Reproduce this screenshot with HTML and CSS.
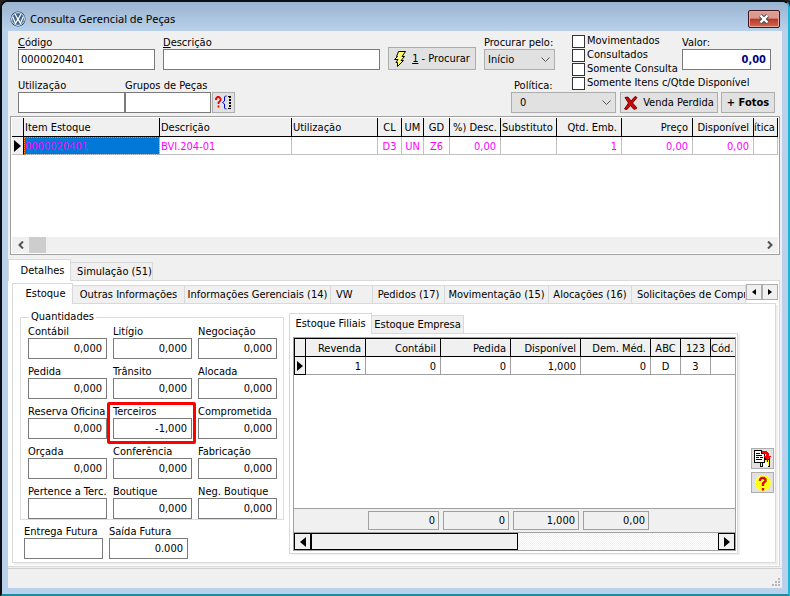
FILE: index.html
```
<!DOCTYPE html>
<html lang="pt-BR">
<head>
<meta charset="utf-8">
<title>Consulta Gerencial de Peças</title>
<link rel="stylesheet" href="styles.css">
</head>
<body>
<main class="window">
  <header class="titlebar">
    <svg class="logo" viewBox="0 0 16 16" aria-hidden="true"><circle cx="8" cy="8" r="7.5" fill="#1d3f66"/><circle cx="8" cy="8" r="6.4" fill="#3f658e" stroke="#e4eef8" stroke-width="1"/><path d="M5 2.8 8 8.6 11 2.8M2.6 5.5 5.6 12.4 8 8 10.4 12.4 13.4 5.5" fill="none" stroke="#fff" stroke-width="1.2"/></svg>
    <h1>Consulta Gerencial de Peças</h1>
    <button class="close" aria-label="Fechar"><svg width="12" height="10" viewBox="0 0 12 10"><path d="M2.5 1.5 9.5 8.5M9.5 1.5 2.5 8.5" stroke="#3d4654" stroke-width="4.2"/><path d="M2.5 1.5 9.5 8.5M9.5 1.5 2.5 8.5" stroke="#fff" stroke-width="2.4"/></svg></button>
  </header>

  <div class="client">
    <form class="search">
      <div class="row first">
        <div class="field codigo"><label for="codigo"><u>C</u>ódigo</label><input id="codigo" type="text" value="0000020401"></div>
        <div class="field descricao"><label for="descricao"><u>D</u>escrição</label><input id="descricao" type="text"></div>
        <button type="button" class="btn find"><svg width="12" height="16" viewBox="0 0 12 16"><path d="M4.5.5H11.5L8 5.5H10.500L7 9.500H9.500L3.500 15.500V11.500H2L4 8.500H.5L3.500 5.500H2.500Z" fill="#ffff60" stroke="#000"/><path d="M6 2.500 4 6.500M8 6.500 5 9.500" stroke="#fff" fill="none"/></svg><span><u>1</u> - Procurar</span></button>
        <div class="field por"><label for="por">Procurar pelo:</label><select id="por"><option>Início</option></select></div>
        <div class="checks">
          <label><input type="checkbox">Movimentados</label>
          <label><input type="checkbox">Consultados</label>
          <label><input type="checkbox">Somente Consulta</label>
          <label><input type="checkbox">Somente Itens c/Qtde Disponível</label>
        </div>
        <div class="field valor"><label for="valor">Valor:</label><input id="valor" type="text" value="0,00"></div>
      </div>
      <div class="row second">
        <div class="field utilizacao"><label for="utilizacao">Utilização</label><input id="utilizacao" type="text"></div>
        <div class="field grupos"><label for="grupos">Grupos de Peças</label><input id="grupos" type="text"></div>
        <button type="button" class="btn groups" aria-label="Escolher grupos"><svg width="17" height="15" viewBox="0 0 17 15"><path d="M1 5V3.500L2.500 2H4L5.500 3.500V5.500L3.500 7.500V9M3.500 10.500V12.500" fill="none" stroke="#f00000" stroke-width="1.800"/><path d="M11.500 1H10.500L9.500 2V6L7.500 7.500 9.500 9V13L10.500 14H11.500" fill="none" stroke="#0000d8"/><path d="M13 1.500H16M13 13.500H16" stroke="#000"/><path d="M15 1V14" stroke="#000" stroke-width="2" stroke-dasharray="2 1"/></svg></button>
        <div class="field politica"><label for="politica">Política:</label><select id="politica"><option>0</option></select></div>
        <button type="button" class="btn lost"><svg width="14" height="14" viewBox="0 0 14 14"><path d="M1 1.500 4 1 7 5 11 .5 13 1.500 8.500 7 13 12 10 13.500 6.500 9.500 3 13.500.5 13 4.500 7Z" fill="#c80808" stroke="#7e0000"/></svg><span>Venda Perdida</span></button>
        <button type="button" class="btn photos">+ Fotos</button>
      </div>
    </form>

    <section class="items">
      <table class="grid">
        <colgroup><col class="w12"><col class="w136"><col><col class="w86"><col class="w24"><col class="w22"><col class="w26"><col class="w51"><col class="w56"><col class="w65"><col class="w71"><col class="w61"><col class="w24"></colgroup>
        <thead><tr><th></th><th>Item Estoque</th><th>Descrição</th><th>Utilização</th><th class="c">CL</th><th class="c">UM</th><th class="c">GD</th><th class="c">%) Desc.</th><th>Substituto</th><th class="r">Qtd. Emb.</th><th class="r">Preço</th><th class="r">Disponível</th><th class="cut">ítica</th></tr></thead>
        <tbody><tr><td class="mark"><svg width="7" height="12" viewBox="0 0 7 12"><path d="M0 0 7 6 0 12Z"/></svg></td><td class="sel">0000020401</td><td>BVI.204-01</td><td></td><td class="c">D3</td><td class="c">UN</td><td class="c">Z6</td><td class="r">0,00</td><td></td><td class="r">1</td><td class="r">0,00</td><td class="r">0,00</td><td></td></tr></tbody>
      </table>
      <div class="hscroll"><button aria-label="Rolar à esquerda"><svg width="6" height="8" viewBox="0 0 6 8"><path d="M5 .5 1.500 4 5 7.500"/></svg></button><i></i><button class="end" aria-label="Rolar à direita"><svg width="6" height="8" viewBox="0 0 6 8"><path d="M1 .5 4.500 4 1 7.500"/></svg></button></div>
    </section>

    <nav class="tabs outer"><button class="tab on">Detalhes</button><button class="tab">Simulação (51)</button></nav>
    <section class="page">
      <nav class="tabs inner">
        <div class="strip"><button class="tab on">Estoque</button><button class="tab t112">Outras Informações</button><button class="tab t146">Informações Gerenciais (14)</button><button class="tab t42 left">VW</button><button class="tab t72">Pedidos (17)</button><button class="tab t104">Movimentação (15)</button><button class="tab t83">Alocações (16)</button><button class="tab rest left">Solicitações de Compra</button></div>
        <div class="spin"><button aria-label="Abas anteriores"><svg width="4" height="6" viewBox="0 0 4 6"><path d="M4 0V6L0 3Z"/></svg></button><button aria-label="Próximas abas"><svg width="4" height="6" viewBox="0 0 4 6"><path d="M0 0V6L4 3Z"/></svg></button></div>
      </nav>
      <div class="sheet">
        <div class="left-side">
          <fieldset>
            <legend>Quantidades</legend>
            <div class="amounts">
              <div class="field"><label for="q1">Contábil</label><input id="q1" value="0,000"></div>
              <div class="field"><label for="q2">Litígio</label><input id="q2" value="0,000"></div>
              <div class="field"><label for="q3">Negociação</label><input id="q3" value="0,000"></div>
              <div class="field"><label for="q4">Pedida</label><input id="q4" value="0,000"></div>
              <div class="field"><label for="q5">Trânsito</label><input id="q5" value="0,000"></div>
              <div class="field"><label for="q6">Alocada</label><input id="q6" value="0,000"></div>
              <div class="field"><label for="q7">Reserva Oficina</label><input id="q7" value="0,000"></div>
              <div class="field flagged"><label for="q8">Terceiros</label><input id="q8" value="-1,000"></div>
              <div class="field"><label for="q9">Comprometida</label><input id="q9" value="0,000"></div>
              <div class="field"><label for="q10">Orçada</label><input id="q10" value="0,000"></div>
              <div class="field"><label for="q11">Conferência</label><input id="q11" value="0,000"></div>
              <div class="field"><label for="q12">Fabricação</label><input id="q12" value="0,000"></div>
              <div class="field"><label for="q13">Pertence a Terc.</label><input id="q13"></div>
              <div class="field"><label for="q14">Boutique</label><input id="q14" value="0,000"></div>
              <div class="field"><label for="q15">Neg. Boutique</label><input id="q15" value="0,000"></div>
            </div>
          </fieldset>
          <div class="amounts future">
            <div class="field"><label for="q16">Entrega Futura</label><input id="q16"></div>
            <div class="field"><label for="q17">Saída Futura</label><input id="q17" value="0.000"></div>
          </div>
        </div>

        <div class="branches">
          <nav class="tabs"><button class="tab on">Estoque Filiais</button><button class="tab">Estoque Empresa</button></nav>
          <div class="frame">
            <div class="stock">
              <table>
                <colgroup><col class="w12"><col class="w60"><col class="w75"><col class="w70"><col class="w70"><col class="w70"><col class="w30"><col class="w30"><col></colgroup>
                <thead><tr><th></th><th class="r">Revenda</th><th class="r">Contábil</th><th class="r">Pedida</th><th class="r">Disponível</th><th class="r">Dem. Méd.</th><th class="c">ABC</th><th class="c">123</th><th class="cut">Cód.</th></tr></thead>
                <tbody><tr><td class="mark"><svg width="6" height="10" viewBox="0 0 6 10"><path d="M0 0 6 5 0 10Z"/></svg></td><td class="r">1</td><td class="r">0</td><td class="r">0</td><td class="r">1,000</td><td class="r">0</td><td class="c">D</td><td class="c">3</td><td></td></tr></tbody>
              </table>
              <div class="totals"><output class="wide">0</output><output>0</output><output>1,000</output><output>0,00</output></div>
              <div class="classic"><button aria-label="Rolar à esquerda"><svg width="6" height="10" viewBox="0 0 6 10"><path d="M6 0V10L0 5Z"/></svg></button><i></i><button class="end" aria-label="Rolar à direita"><svg width="6" height="10" viewBox="0 0 6 10"><path d="M0 0V10L6 5Z"/></svg></button></div>
            </div>
          </div>
        </div>

        <div class="tools">
          <button class="btn" aria-label="Exportar"><svg width="17" height="17" viewBox="0 0 17 17" shape-rendering="crispEdges"><path d="M6 8H16V17H6Z" fill="#111"/><path d="M7 12H8V16H7ZM14 10H15V16H14ZM11 10H13V12H11Z" fill="#ff0"/><path d="M9 12H14V17H9Z" fill="#fff"/><path d="M.5.5H7.500L10.500 3.500V12.500H.5Z" fill="#fff" stroke="#000"/><path d="M7.500.5V3.500H10.500M2 3.500H6M2 5.500H8M2 7.500H5M6 7.500H9M2 9.500H8" fill="none" stroke="#000"/><path d="M8 1H12L15 3V6H17L13 10 10 6H12V4L8 3Z" fill="#f00"/></svg></button>
          <button class="btn" aria-label="Ajuda"><svg width="16" height="16" viewBox="0 0 16 16"><defs><pattern id="dots" width="2" height="2" patternUnits="userSpaceOnUse"><path d="M0 0H1V1H0ZM1 1H2V2H1Z" fill="#ff0"/><path d="M1 0H2V1H1ZM0 1H1V2H0Z" fill="#fff"/></pattern></defs><circle cx="8" cy="8" r="7.800" fill="url(#dots)"/><path d="M5 6V4.500L6.500 3H9L10.500 4.500V6L8 8.500V11M8 13V15.500" fill="none" stroke="#e00000" stroke-width="2.400"/></svg></button>
        </div>
      </div>
    </section>
    <footer class="status"><svg width="8" height="8" viewBox="0 0 8 8"><path d="M6 0H8V2H6ZM3 3H5V5H3ZM6 3H8V5H6ZM0 6H2V8H0ZM3 6H5V8H3ZM6 6H8V8H6Z" fill="#b8b8b8"/></svg></footer>
  </div>
</main>
</body>
</html>
```
FILE: styles.css
```
* { box-sizing: border-box; }
body {
  margin: 0;
  background: #222;
  color: #000;
  font: 11px/14px "DejaVu Sans Condensed", "DejaVu Sans", sans-serif;
}
button, input, select { font: inherit; color: inherit; margin: 0; border-radius: 0; }
button { padding: 0; }
svg { display: block; flex: none; }
label, th, td, button, legend { white-space: nowrap; }

.window {
  display: flex;
  flex-direction: column;
  min-height: 100vh;
  padding: 0 6px 6px;
  border: 2px solid #0b1014;
  border-width: 2px 2px 3px;
  border-right-color: #1db5d8;
  border-bottom-color: #1b8ba4;
  border-radius: 8px 8px 0 0;
  background: #b9d1ea;
}
.titlebar {
  display: flex;
  align-items: center;
  gap: 4px;
  height: 29px;
  margin: 0 -6px;
  padding: 4px 8px 0;
  border-radius: 6px 6px 0 0;
  background: linear-gradient(#99b4d1, #b9d1ea);
}
.logo { width: 16px; height: 16px; }
h1 { margin: 0; font: 11px/16px "Noto Sans", "Open Sans", sans-serif; }
.close {
  display: flex;
  align-items: center;
  justify-content: center;
  width: 32px;
  height: 18px;
  margin-left: auto;
  border: 1px solid #431422;
  border-radius: 2px;
  box-shadow: inset 0 0 0 1px #e4a79d;
  background: linear-gradient(#d99a8f 0 45%, #b8372a 50%, #d2694f);
}

.client {
  display: flex;
  flex: 1;
  flex-direction: column;
  background: #f0f0f0;
}

/* search form */
.search { padding: 3px 7px 3px 10px; }
.row { display: flex; }
.field { display: flex; flex-direction: column; }
.field label { height: 14px; line-height: 16px; }
.field input {
  width: 100%;
  height: 21px;
  padding: 0 4px 0 2px;
  border: 1px solid #7a7a7a;
  background: #fff;
}
.first { gap: 8px; align-items: flex-start; }
.first .field { padding-top: 1px; }
.codigo { width: 137px; }
.descricao { flex: 1; }
.btn {
  display: flex;
  align-items: center;
  justify-content: center;
  border: 1px solid #adadad;
  background: #e1e1e1;
}
.find { gap: 6px; width: 88px; height: 23px; margin-top: 13px; }
select {
  width: 100%;
  height: 21px;
  padding: 0 3px;
  border: 1px solid #adadad;
  appearance: none;
  background: #e1e1e1 url("data:image/svg+xml,%3Csvg xmlns='http://www.w3.org/2000/svg' width='9' height='6'%3E%3Cpath d='M.5.5 4.500 4.500 8.500.5' fill='none' stroke='%23555'/%3E%3C/svg%3E") right 4px center no-repeat;
}
.por { width: 71px; }
.checks { width: 102px; margin-left: 9px; }
.checks label { display: flex; align-items: center; gap: 2px; height: 14px; }
.checks input {
  flex: none;
  width: 13px;
  height: 13px;
  border: 1px solid #333;
  appearance: none;
  background: #fff;
}
.valor { width: 89px; margin-right: 4px; }
.valor input { color: #000080; font-weight: bold; text-align: right; }
.second { align-items: flex-end; margin-top: -12px; }
.utilizacao { width: 107px; }
.grupos { width: 86px; }
.groups { width: 23px; height: 21px; margin-left: 1px; }
.politica { width: 105px; margin-left: auto; }
.politica label { padding-left: 3px; }
.politica select { padding-left: 8px; }
.lost { gap: 5px; width: 98px; height: 21px; margin-left: 4px; }
.photos { width: 54px; height: 21px; margin-left: 3px; font-weight: bold; }

/* item grid */
.items {
  display: flex;
  flex-direction: column;
  height: 139px;
  margin: 0 2px 4px 2px;
  padding: 1px;
  border: 1px solid #a0a0a0;
  background: #fff;
}
table { width: 100%; table-layout: fixed; border-collapse: separate; border-spacing: 0; }
th, td { height: 18px; padding: 2px 4px 0 1px; overflow: hidden; font-weight: normal; text-align: left; }
.grid th { height: 19px; border-right: 1px solid #000; border-bottom: 1px solid #000; background: #f0f0f0; }
.grid td { border-right: 1px solid #c0c0c0; border-bottom: 1px solid #c0c0c0; color: #f0f; }
.grid td.sel { background: #0078d7; outline: 1px dotted #ff8728; outline-offset: -1px; }
th.r, td.r { text-align: right; }
th.c, td.c { padding: 2px 1px 0; text-align: center; }
th.cut { padding: 2px 0 0; }
.grid td.mark { padding: 0 2px; border-right-color: #000; background: #f0f0f0; }
.w12 { width: 12px; } .w22 { width: 22px; } .w24 { width: 24px; } .w26 { width: 26px; }
.w30 { width: 30px; } .w51 { width: 51px; } .w56 { width: 56px; } .w60 { width: 60px; }
.w61 { width: 61px; } .w65 { width: 65px; } .w70 { width: 70px; } .w71 { width: 71px; }
.w75 { width: 75px; } .w86 { width: 86px; } .w136 { width: 136px; }
.hscroll { display: flex; height: 16px; margin-top: auto; background: #f0f0f0; }
.hscroll button {
  display: flex;
  align-items: center;
  justify-content: center;
  width: 17px;
  border: 0;
  background: none;
}
.hscroll path { fill: none; stroke: #505050; stroke-width: 2; }
.hscroll i { width: 17px; background: #cdcdcd; }
.hscroll .end, .classic .end { margin-left: auto; }

/* tabs */
.tabs { display: flex; align-items: flex-end; }
.tab {
  height: 18px;
  padding: 1px 3px 0 8px;
  border: 1px solid #d9d9d9;
  border-width: 1px 1px 0 0;
  background: #f0f0f0;
}
.tab.on {
  position: relative;
  height: 21px;
  margin-bottom: -1px;
  padding: 0 7px;
  border-left-width: 1px;
  background: #fff;
}
.outer .on { width: 63px; height: 22px; padding: 0 0 0 6px; }
.outer .tab:last-child { width: 82px; padding: 1px 0 0 6px; }
.page {
  display: flex;
  flex: 1;
  flex-direction: column;
  margin-right: 2px;
  padding: 2px 3px 3px 4px;
  border: 1px solid #d9d9d9;
  border-left: 0;
  background: #fff;
}
.inner { justify-content: space-between; margin-right: -2px; }
.strip { display: flex; flex: 1; align-items: flex-end; min-width: 0; height: 20px; }
.strip .tab { flex: none; padding: 1px 0 0; }
.strip .on { width: 61px; height: 21px; padding: 0 0 0 6px; }
.strip .left { padding-left: 5px; text-align: left; }
.strip .t42 { width: 42px; } .strip .t72 { width: 72px; } .strip .t83 { width: 83px; }
.strip .t104 { width: 104px; } .strip .t112 { width: 112px; } .strip .t146 { width: 146px; }
.strip .rest { flex: 1; min-width: 0; overflow: hidden; }
.spin { display: flex; align-self: flex-start; padding-top: 1px; }
.spin button {
  display: flex;
  align-items: center;
  justify-content: center;
  width: 16px;
  height: 16px;
  border: 1px solid #adadad;
  background: #f0f0f0;
}
.sheet {
  display: flex;
  flex: 1;
  padding: 6px 1px 3px 7px;
  border: 1px solid #d9d9d9;
  box-shadow: 2px 2px #f0f0f0;
}

/* quantities */
.left-side { width: 264px; }
fieldset { margin: 0; padding: 0 0 0 7px; border: 1px solid #dcdcdc; }
legend { height: 14px; margin-left: 1px; padding: 0 2px; }
.amounts { display: grid; grid-template-columns: repeat(3, 79px); gap: 5px 6px; }
.amounts input { text-align: right; }
.flagged { position: relative; }
.flagged::after {
  content: "";
  position: absolute;
  inset: -2px -4px -5px -6px;
  border: 3px solid #f00;
  border-radius: 2px;
  pointer-events: none;
}
.future { padding: 4px 0 0 4px; }

/* branch stock */
.branches { display: flex; flex: 1; flex-direction: column; min-width: 0; margin: 3px 13px 5px 5px; }
.branches .on { width: 83px; padding: 0; }
.branches .tab:last-child { width: 92px; padding: 1px 0 0; }
.frame {
  display: flex;
  flex: 1;
  padding: 3px 1px 2px 3px;
  border: 1px solid #d9d9d9;
  box-shadow: 2px 1px #f0f0f0;
}
.stock { display: flex; flex: 1; flex-direction: column; min-width: 0; border: 1px solid #a0a0a0; }
.stock th { height: 19px; border-top: 1px solid #000; border-right: 1px solid #000; border-bottom: 1px solid #000; background: #f0f0f0; }
.stock td { border-right: 1px solid #a0a0a0; border-bottom: 1px solid #a0a0a0; }
.stock th:first-child, .stock td:first-child { border-left: 1px solid #000; }
.stock td.mark { padding: 0 2px; border-right-color: #000; border-bottom-color: #000; background: #f0f0f0; }
.stock th:last-child, .stock td:last-child { border-right: 0; }
.totals {
  display: flex;
  gap: 4px;
  height: 25px;
  margin-top: auto;
  padding: 2px 0 2px 74px;
  border-top: 1px solid #a0a0a0;
  border-bottom: 1px solid #a0a0a0;
  background: #f0f0f0;
}
output { width: 66px; padding: 2px 3px; border: 1px solid #a0a0a0; text-align: right; }
output.wide { width: 71px; }
.classic {
  display: flex;
  height: 17px;
  background: repeating-conic-gradient(#fff 0 25%, #f0f0f0 0 50%) 0 0 / 2px 2px;
}
.classic button {
  display: flex;
  align-items: center;
  justify-content: center;
  width: 17px;
  border: 1px solid #000;
  background: #f0f0f0;
}
.classic i { width: 47%; border: 1px solid #000; background: #f0f0f0; }

.tools { display: flex; flex-direction: column; gap: 3px; width: 23px; margin-top: 138px; }
.tools .btn { height: 21px; }

.status {
  display: flex;
  align-items: flex-end;
  justify-content: flex-end;
  height: 20px;
  margin-top: 1px;
  padding: 2px;
  border-top: 1px solid #d0d0d0;
}
```
